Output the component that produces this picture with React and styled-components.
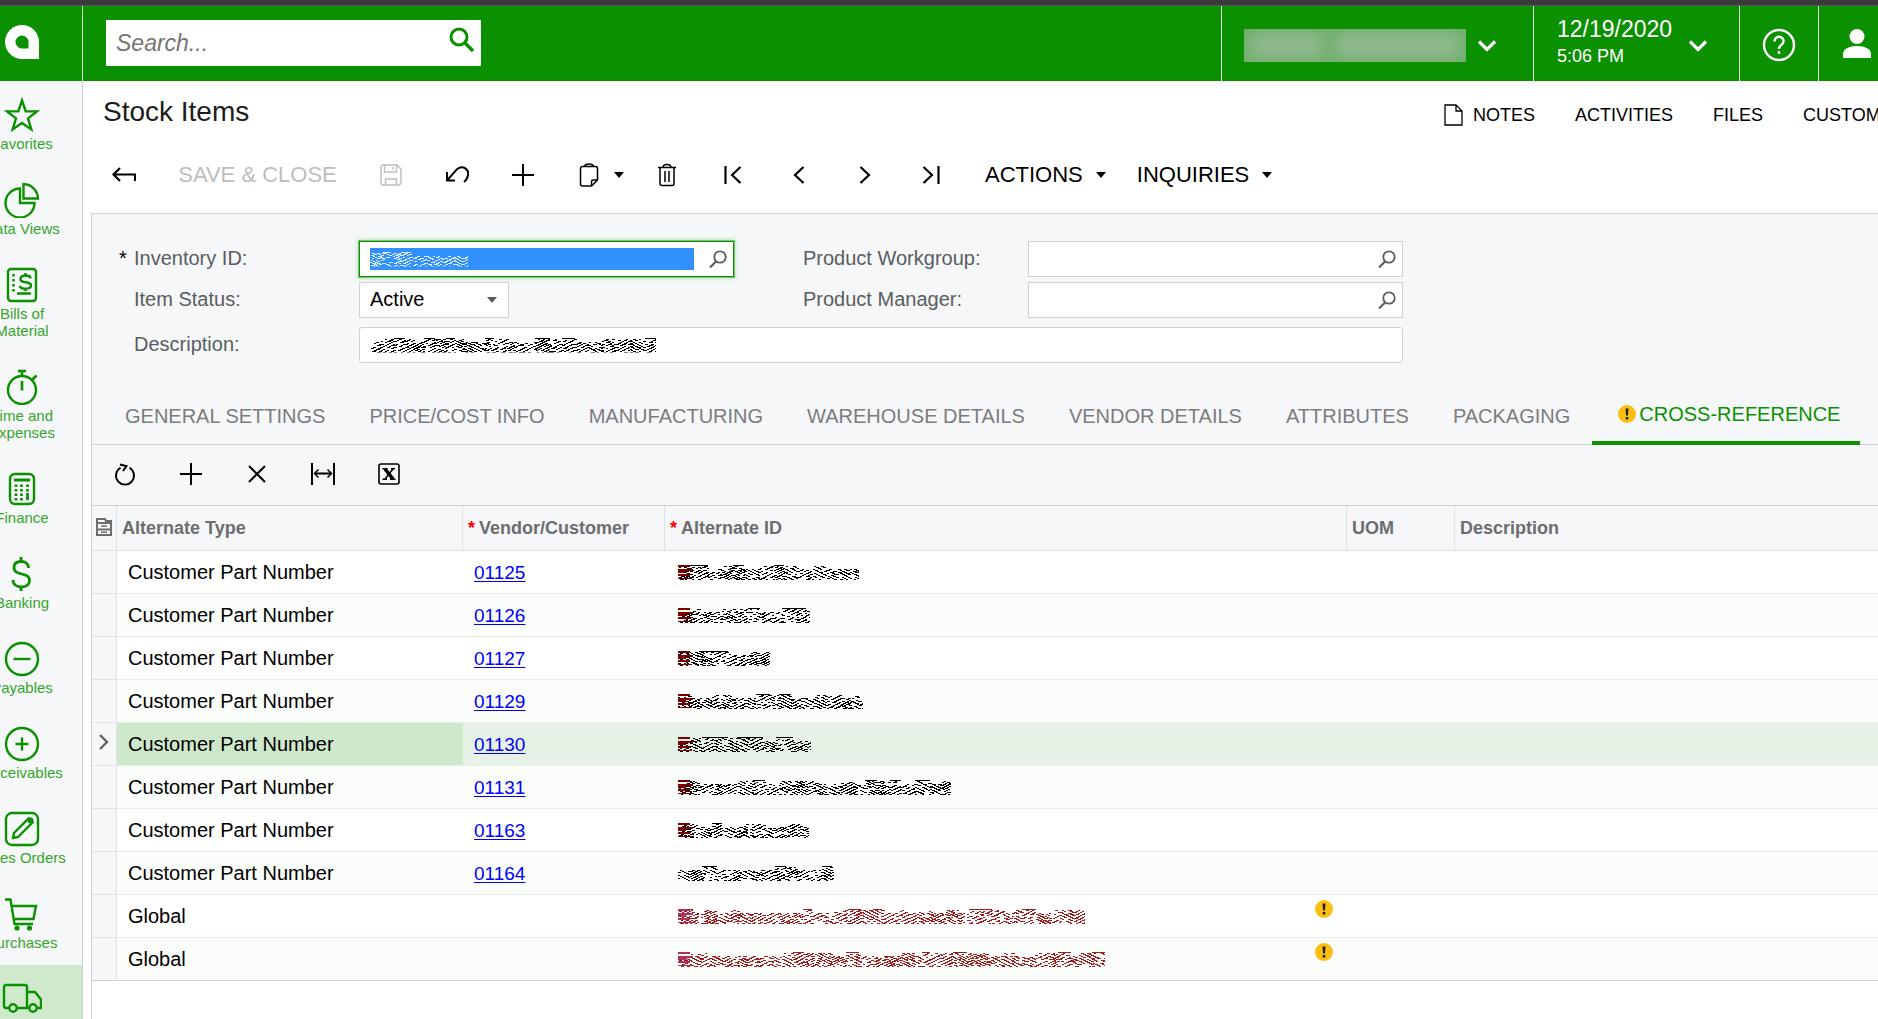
import React from "react";
import styled, { createGlobalStyle, css } from "styled-components";

const green = "#0b9000";
const line = "#cfd2d6";
const softLine = "#dfe2e6";
const pale = "#f5f7f9";
const font = '"Liberation Sans", Arial, sans-serif';

const Global = createGlobalStyle`
  *, *::before, *::after { box-sizing: border-box; }
  html, body { margin: 0; height: 100%; overflow: hidden; }
  body { font-family: ${font}; background: #fff; color: #000; }
  button, input, select { font-family: inherit; }
  svg { display: block; flex: none; }
`;

const Page = styled.div`
  display: flex;
  flex-direction: column;
  height: 100vh;
  overflow: hidden;
  border-top: 5px solid #3a393b;
`;

/* ---------- header ---------- */
const Header = styled.header`
  display: flex;
  flex: none;
  height: 76px;
  background: ${green};
  border-top: 1px solid #5a5560;
`;
const LogoLink = styled.a`
  display: flex;
  align-items: center;
  width: 83px;
  padding-left: 5px;
  padding-bottom: 4px;
  border-right: 1px solid #cfe0cf;
`;
const SearchBox = styled.form`
  display: flex;
  align-items: center;
  width: 375px;
  height: 46px;
  margin: 14px auto 0 23px;
  background: #fff;
`;
const SearchInput = styled.input`
  flex: 1;
  min-width: 0;
  height: 46px;
  padding: 0 10px;
  border: 0;
  outline: 0;
  background: none;
  font-size: 23px;
  &::placeholder { font-style: italic; color: #757575; opacity: 1; }
`;
const SearchButton = styled.button`
  padding: 0 7px 6px 0;
  border: 0;
  background: none;
`;
const HeaderCell = styled.button`
  display: flex;
  flex: none;
  align-items: center;
  width: ${(p) => p.$width}px;
  padding: ${(p) => p.$top || 0}px 0 0 ${(p) => p.$pad}px;
  border: 0;
  border-left: 1px solid #e3f1e2;
  background: none;
  color: #fff;
  text-align: left;
`;
const Company = styled.span`
  display: flex;
  align-items: center;
  justify-content: space-around;
  width: 222px;
  height: 33px;
  margin-right: 11px;
  overflow: hidden;
  background: #6fae6b;
`;
const Smudge = styled.span`
  width: ${(p) => p.$width}px;
  height: 20px;
  background: #90ba8e;
  filter: blur(7px);
  box-shadow: 0 0 6px 4px #86b583;
`;
const Clock = styled.span`
  display: flex;
  flex-direction: column;
  width: 131px;
  padding-bottom: 8px;
`;
const DateText = styled.span`
  font-size: 23px;
  line-height: 28px;
`;
const TimeText = styled.span`
  font-size: 18px;
  line-height: 26px;
`;

/* ---------- sidebar ---------- */
const Body = styled.div`
  display: flex;
  flex: 1;
  min-height: 0;
`;
const Sidebar = styled.nav`
  flex: none;
  width: 83px;
  overflow: hidden;
  background: ${pale};
  border-right: 1px solid ${line};
`;
const NavList = styled.ul`
  width: 120px;
  margin: 0 0 0 -38px;
  padding: 0;
  list-style: none;
`;
const NavLink = styled.a`
  display: flex;
  flex-direction: column;
  align-items: center;
  gap: 2px;
  padding: 16px 16px 14px;
  color: #35a52d;
  font-size: 15px;
  line-height: 17px;
  text-align: center;
  text-decoration: none;
  white-space: pre-line;
  background: ${(p) => (p.$active ? "#cfe9cd" : "transparent")};
  svg { color: ${green}; }
`;

/* ---------- page top ---------- */
const Main = styled.main`
  display: flex;
  flex: 1;
  flex-direction: column;
  min-width: 0;
`;
const TitleBar = styled.div`
  display: flex;
  flex: none;
  align-items: center;
  justify-content: space-between;
  height: 54px;
  padding: 8px 0 0 20px;
`;
const Title = styled.h1`
  margin: 0;
  font-size: 28px;
  line-height: 32px;
  font-weight: 400;
  color: #1c1c1c;
`;
const PageLinks = styled.div`
  display: flex;
  flex: none;
  gap: 40px;
  width: 434px;
  padding-top: 6px;
`;
const PageLink = styled.button`
  display: flex;
  align-items: center;
  gap: 10px;
  padding: 0;
  border: 0;
  background: none;
  color: #000;
  font-size: 18px;
  line-height: 22px;
`;
const Toolbar = styled.div`
  display: flex;
  flex: none;
  align-items: center;
  height: ${(p) => p.$height}px;
  padding-left: ${(p) => p.$pad || 0}px;
  ${(p) => (p.$ruled ? css`padding-bottom: 2px; border-bottom: 1px solid ${line};` : css`padding-top: 2px;`)}
`;
const IconButton = styled.button`
  display: flex;
  align-items: center;
  justify-content: center;
  gap: 14px;
  width: ${(p) => (p.$split ? 78 : 66)}px;
  height: 44px;
  padding: 0 ${(p) => (p.$split ? 8 : 0)}px 0 ${(p) => (p.$split ? 22 : 0)}px;
  border: 0;
  background: none;
  color: ${(p) => (p.disabled ? "#bdbdbd" : "#000")};
`;
const TextButton = styled.button`
  display: flex;
  align-items: center;
  gap: 12px;
  height: 44px;
  padding: 0 9px 0 21px;
  border: 0;
  background: none;
  color: ${(p) => (p.disabled ? "#bdbdbd" : "#000")};
  font-size: 22px;
  white-space: nowrap;
`;
const SaveClose = styled(TextButton)`
  justify-content: center;
  width: 201px;
  padding: 0;
`;

/* ---------- form ---------- */
const Panel = styled.section`
  display: flex;
  flex: 1;
  flex-direction: column;
  min-height: 0;
  margin-left: 8px;
  border: 1px solid ${line};
  border-width: 1px 0 0 1px;
`;
const Form = styled.form`
  display: grid;
  grid-template-columns: 240px 375px 54px 240px 375px;
  padding: 27px 0 0 27px;
  background: ${pale};
`;
const Label = styled.label`
  display: flex;
  align-items: center;
  height: 36px;
  padding: 0 0 1px ${(p) => (p.$required ? 0 : 15)}px;
  color: #5b5d60;
  font-size: 20px;
  grid-column: ${(p) => p.$col || 1};
  margin-top: ${(p) => p.$gap || 0}px;
`;
const Star = styled.span`
  width: 15px;
  color: #000;
`;
const Field = styled.div`
  position: relative;
  display: flex;
  align-items: center;
  width: ${(p) => (p.$narrow ? "150px" : "auto")};
  height: 36px;
  margin-top: ${(p) => p.$gap || 0}px;
  grid-column: ${(p) => p.$col || 2};
  background: #fff;
  border: 1px solid ${(p) => (p.$focus ? green : "#cfcfd6")};
  border-radius: ${(p) => (p.$wide ? 3 : 0)}px;
  ${(p) => p.$focus && css`box-shadow: 0 0 0 1px #7cc376, 0 0 4px 1px #a7d6a3;`}
`;
const Input = styled.input`
  flex: 1;
  min-width: 0;
  height: ${(p) => (p.$selected ? 22 : 34)}px;
  margin-left: 10px;
  padding: 0;
  border: 0;
  outline: 0;
  font-size: 20px;
  background: ${(p) => (p.$selected ? "#3390ff" : "transparent")};
`;
const Lookup = styled.button`
  width: 39px;
  padding: 0 6px 1px 15px;
  border: 0;
  background: none;
  color: #5b5d60;
`;
const Select = styled.select`
  appearance: none;
  width: 100%;
  height: 34px;
  padding: 0 0 2px 10px;
  border: 0;
  outline: 0;
  background: none;
  color: #000;
  font-size: 20px;
`;
const Overlay = styled.span`
  position: absolute;
  top: 50%;
  left: 10px;
  transform: translateY(-50%);
  pointer-events: none;
`;
const SelectCaret = styled.span`
  position: absolute;
  right: 10px;
  top: 14px;
  color: #5b5d60;
  pointer-events: none;
`;

/* ---------- tabs ---------- */
const Tabs = styled.div`
  display: flex;
  flex: none;
  height: 82px;
  padding: 22px 0 0 11px;
  background: ${pale};
  box-shadow: inset 0 -1px 0 ${line};
`;
const Tab = styled.button`
  display: flex;
  align-items: center;
  gap: 3px;
  padding: ${(p) => (p.$active ? "2px 20px 0 26px" : "6px 22px 0")};
  border: 0;
  border-bottom: 4px solid ${(p) => (p.$active ? green : "transparent")};
  background: none;
  color: ${(p) => (p.$active ? green : "#7b7d80")};
  font-size: 20px;
  white-space: nowrap;
`;

/* ---------- grid ---------- */
const GridTools = styled.div`
  flex: none;
  background: ${pale};
`;
const Table = styled.table`
  width: 100%;
  table-layout: fixed;
  border-collapse: separate;
  border-spacing: 0;
`;
const Th = styled.th`
  height: 45px;
  padding: 0 0 0 5px;
  border-right: 1px solid ${softLine};
  border-bottom: 1px solid ${softLine};
  background: ${pale};
  color: #6b6d70;
  font-size: 18px;
  text-align: left;
  white-space: nowrap;
  &:first-child { padding: 0 0 2px 4px; }
  &:last-child { border-right: 0; }
`;
const Req = styled.span`
  color: #f00;
  margin-right: 4px;
`;
const Row = styled.tr`
  background: ${(p) => (p.$selected ? "#e6f2e5" : p.$odd ? "#fbfdfa" : "#fff")};
`;
const Td = styled.td`
  height: 43px;
  padding: 1px 14px 0 ${(p) => p.$pad || 11}px;
  border-bottom: 1px solid #e6f1e5;
  background: ${(p) => (p.$current ? "#cde8cb" : "transparent")};
  font-size: 20px;
  white-space: nowrap;
  tr:last-child > & { border-bottom-color: ${line}; }
`;
const Handle = styled.td`
  padding: 0 0 4px 6px;
  background: ${pale};
  border-right: 1px solid ${softLine};
  border-bottom: 1px solid ${softLine};
  color: #5b5d60;
  tr:last-child > & { border-bottom-color: ${line}; }
`;
const VendorLink = styled.a`
  color: #00f;
  font-size: 19px;
  text-underline-offset: 2px;
`;
const AltCell = styled.div`
  display: flex;
  align-items: center;
  justify-content: space-between;
`;
const Badge = styled.span`
  margin-bottom: 16px;
`;

/* ---------- drawings ---------- */
const Svg = ({ w, h = w, sw = 2, fill = "none", children, ...rest }) => (
  <svg width={w} height={h} viewBox={`0 0 ${w} ${h}`} fill={fill} stroke="currentColor" strokeWidth={sw} aria-hidden="true" {...rest}>
    {children}
  </svg>
);

const Logo = () => (
  <svg width="34" height="34" viewBox="0 0 34 34" aria-hidden="true">
    <path fill="#fff" fillRule="evenodd" d="M17 0a17 17 0 0 1 17 17v17H17A17 17 0 0 1 17 0Zm0 10.500a6.500 6.500 0 0 0 0 13h6.500V17A6.500 6.500 0 0 0 17 10.500Z" />
  </svg>
);
const SearchGlyph = () => (
  <Svg w={26} sw={3} color={green}><circle cx="11" cy="10" r="8" /><path d="M16.500 15.500l8.500 8.500" strokeWidth="3.400" /></Svg>
);
const Down = () => <Svg w={20} h={12} sw={3.2} color="#fff"><path d="M2 1.500l8 8 8-8" /></Svg>;
const Help = () => (
  <Svg w={34} sw={2.4} color="#fff">
    <circle cx="17" cy="17" r="15" />
    <path d="M12.500 13.500c0-6.500 9.500-6 9 0-.3 3.500-4.500 3.500-4.500 7.500M17 23v3" />
  </Svg>
);
const Person = () => (
  <Svg w={30} h={30} sw={0} fill="#fff"><ellipse cx="15" cy="7.500" rx="7.500" ry="7.500" /><path d="M1 29v-4c0-5 6-8 14-8s14 3 14 8v4Z" /></Svg>
);
const DocIcon = () => <Svg w={19} h={22} sw={1.3}><path d="M1 1h11l6 6v14H1ZM12 1v6h6" /></Svg>;
const Caret = () => <Svg w={12} h={6} sw={0} fill="currentColor"><path d="M1 0h10L6 6Z" /></Svg>;

const nav = {
  star: <path d="M18 3.500l3.700 10.700 11.300.2-9 7 3.300 11L18 26l-9.300 6.400 3.300-11-9-7 11.300-.2Z" />,
  pie: <><path d="M16 6.500A14.500 14.500 0 1 0 30.500 21H16Z" /><path d="M19.500 2a15 15 0 0 1 14.500 14.500H19.500Z" /></>,
  bill: <>
    <rect x="4" y="2" width="28" height="32" rx="3" />
    <path d="M9.500 7v20" strokeDasharray="2.500 2.500" strokeWidth="2.500" />
    <path d="M13 26.500h14M26.500 11.500c0-2-2-3-5-3s-5 1-5 3.500 2 2.800 5 3.200 5.500 1 5.500 3.300-2.200 3.200-5.500 3.200-5.500-1-5.500-3M21.500 6v2.500M21.500 21.700v2.500" />
  </>,
  timer: <><circle cx="18" cy="21" r="14" /><path d="M14 2h8M18 2v5M28 11l4.500-4.500M18 12v9.500" strokeWidth="2.600" /></>,
  calc: <>
    <rect x="6" y="3" width="24" height="30" rx="5" />
    <path d="M10 9h16" strokeWidth="3" />
    <path d="M12 13.500v16M17.500 13.500v16M23.500 13.500v7" strokeDasharray="2.600 1.900" strokeWidth="2.800" />
    <path d="M23.500 22v7" strokeWidth="2.800" />
  </>,
  dollar: <path d="M24.500 12c0-4-2.700-6.500-7.300-6.500s-7.200 2.300-7.200 6c0 9 15.500 4 15.500 13 0 3.800-3.300 6.500-8 6.500S9 28.500 9 24M17 1v4.500M17 31v4" strokeWidth="2.800" />,
  minus: <><circle cx="18" cy="18" r="16" /><path d="M9.500 18h17" /></>,
  plus: <><circle cx="18" cy="18" r="16" /><path d="M11.500 18h13M18 11.500v13" /></>,
  pencil: <><rect x="2" y="2" width="32" height="32" rx="6" /><path d="M9 27l1-5L24.500 7.500l4 4L14 26Z" /><circle cx="26.500" cy="9.500" r="3" fill="currentColor" stroke="none" /></>,
  cart: <><path d="M1 3.500h5.500L10.500 28H29M8 10h24l-2.500 13H10" /><circle cx="13" cy="32" r="2.600" fill="currentColor" stroke="none" /><circle cx="25.500" cy="32" r="2.600" fill="currentColor" stroke="none" /></>,
  truck: <>
    <path d="M5.500 27H2a2 2 0 0 1-2-2V6a2 2 0 0 1 2-2h19a2 2 0 0 1 2 2v21H12.500M23 11h8l6 7.500V27h-4M26 27h-3" />
    <circle cx="9" cy="27" r="3.700" /><circle cx="29" cy="27" r="3.700" />
  </>,
};
const NavIcon = ({ name }) => <Svg w={40} h={36} sw={2.4} viewBox="-2 0 40 36">{nav[name]}</Svg>;

const Back = () => <Svg w={24} sw={2.2}><path d="M23 18v-6.500H1.500M8 5l-6.500 6.500L8 18" /></Svg>;
const Save = () => <Svg w={22} sw={1.4}><path d="M3 1h14l4 4v13a3 3 0 0 1-3 3H3a2 2 0 0 1-2-2V3a2 2 0 0 1 2-2ZM4.500 1v7h12V1M13 3v3M5.500 21v-6h11v6" /></Svg>;
const Undo = () => <Svg w={24} sw={2}><path d="M2 17.500L12 6.200c6-4.700 12.500.5 11 6.300-.6 2.700-2 5-4 6.500M2 9v8.500h8" /></Svg>;
const Plus = () => <Svg w={22} sw={2}><path d="M0 11h22M11 0v22" /></Svg>;
const Clip = () => <Svg w={20} h={24} sw={1.5}><path d="M1.500 5.500a2 2 0 0 1 2-2h13a2 2 0 0 1 2 2V17l-6 6h-9a2 2 0 0 1-2-2ZM5.500 3.500C6 0 14 0 14.500 3.500M12.500 23v-4.500a1.500 1.500 0 0 1 1.500-1.500h4.500" /></Svg>;
const Trash = () => <Svg w={18} h={24} sw={1.5}><path d="M0 4.500h18M2 4.500v16a2 2 0 0 0 2 2h10a2 2 0 0 0 2-2v-16M5 4.500C5 .5 13 .5 13 4.500M7 8v11M11 8v11" /></Svg>;
const First = () => <Svg w={18} sw={2.2}><path d="M1.500 0v18M16.500 1L8 9l8.500 8" /></Svg>;
const Last = () => <Svg w={18} sw={2.2}><path d="M16.500 0v18M1.500 1L10 9l-8.500 8" /></Svg>;
const Prev = () => <Svg w={12} h={18} sw={2.2}><path d="M10.500 1L2 9l8.500 8" /></Svg>;
const Next = () => <Svg w={12} h={18} sw={2.2}><path d="M1.500 1L10 9l-8.500 8" /></Svg>;
const Refresh = () => <Svg w={22} h={24} sw={1.9}><path d="M15.500 5.800a9 9 0 1 1-9 0M6 2.500l6.500 1.500-3.500 5" /></Svg>;
const Cross = () => <Svg w={20} sw={2}><path d="M2 2l16 16M18 2L2 18" /></Svg>;
const Fit = () => <Svg w={26} h={22} sw={2}><path d="M2 0v22M24 0v22M5 10.500h16" /><path d="M8.500 6.500l-4 4 4 4M17.500 6.500l4 4-4 4" strokeWidth="1.500" /></Svg>;
const Excel = () => (
  <Svg w={22} sw={1.6}><rect x="1" y="1" width="20" height="20" rx="2" /><path d="M7 6l8 10" strokeWidth="3.600" /><path d="M15 6L7 16M4.500 5.700h5M13 5.700h4M4.500 16.300h4.500M12 16.300h5.500" strokeWidth="1.500" /></Svg>
);
const Lens = () => <Svg w={18} h={18} sw={1.8}><circle cx="11" cy="7" r="5.700" /><path d="M7 11.500L1 17.500" strokeWidth="2.200" /></Svg>;
const GridIcon = () => (
  <Svg w={16} h={18} sw={2}><path d="M1 1h8l1 2h5v14H1ZM1 5h14M1 11.500h14" /><path d="M5 8h6M5 14.200h6" strokeWidth="1.600" /></Svg>
);
const Pointer = () => <Svg w={12} h={18} sw={2.2}><path d="M2 2l7 7-7 7" /></Svg>;
const Warn = () => (
  <Svg w={18} sw={0}><circle cx="9" cy="9" r="9" fill="#fdbf0f" /><path fill="#222" d="M7.500 3.500h3L10 10.500H8ZM7.700 12h2.600v2.500H7.700Z" /></Svg>
);

/* Slanted, broken hatching that stands where a value has been obscured. */
function hatch(width, seed) {
  let s = seed * 7919 + 13;
  const rnd = () => {
    s = (s * 1103515245 + 12345) % 2147483648;
    return s / 2147483648;
  };
  const glyphs = [];
  for (let x = 0; x < width; ) {
    const w = 8 + Math.floor(rnd() * 8);
    glyphs.push({ x, w, slant: rnd() < 0.6 ? 1 : -1, bar: rnd() < 0.4, low: rnd() < 0.4, step: 5 + Math.floor(rnd() * 3) });
    x += w;
  }
  let d = "";
  glyphs.forEach((g) => {
    for (let y = 0; y < 15; y++) {
      if (g.low && y < 4) continue;
      if (y === 0) {
        if (g.bar) d += `M${g.x} 0h${Math.min(g.w, width - g.x)}v1h-${Math.min(g.w, width - g.x)}z`;
        continue;
      }
      const start = (((-y * g.slant * 2) % g.step) + g.step) % g.step;
      for (let x = start; x < g.w; x += g.step) {
        if (rnd() < 0.2) continue;
        const len = Math.min(2 + Math.floor(rnd() * 2.4), width - g.x - x);
        if (len > 0) d += `M${g.x + x} ${y}h${len}v1h-${len}z`;
      }
    }
  });
  return d;
}
const Scrambled = ({ width, seed, color = "#000", edge }) => (
  <svg width={width} height={15} viewBox={`0 0 ${width} 15`} shapeRendering="crispEdges" aria-hidden="true">
    <path d={hatch(width, seed)} fill={color} />
    {edge && <path fill={edge} d="M0 0h12v2H0zM0 4h15v2H0zM0 6h8v2H0zM0 9h12v2H0zM0 13h14v1H0z" />}
  </svg>
);

/* ---------- data ---------- */
const navItems = [
  ["star", "Favorites"],
  ["pie", "Data Views"],
  ["bill", "Bills of\nMaterial"],
  ["timer", "Time and\nExpenses"],
  ["calc", "Finance"],
  ["dollar", "Banking"],
  ["minus", "Payables"],
  ["plus", "Receivables"],
  ["pencil", "Sales Orders"],
  ["cart", "Purchases"],
  ["truck", "Inventory"],
];
const tabs = ["GENERAL SETTINGS", "PRICE/COST INFO", "MANUFACTURING", "WAREHOUSE DETAILS", "VENDOR DETAILS", "ATTRIBUTES", "PACKAGING"];
const rows = [
  { vendor: "01125", width: 181 },
  { vendor: "01126", width: 132 },
  { vendor: "01127", width: 92 },
  { vendor: "01129", width: 185 },
  { vendor: "01130", width: 133, selected: true },
  { vendor: "01131", width: 273 },
  { vendor: "01163", width: 131 },
  { vendor: "01164", width: 156 },
  { width: 407, warn: true },
  { width: 427, warn: true },
];

export default function App() {
  return (
    <Page>
      <Global />
      <Header>
        <LogoLink href="#home" aria-label="Home"><Logo /></LogoLink>
        <SearchBox role="search">
          <SearchInput type="text" placeholder="Search..." aria-label="Search" />
          <SearchButton type="button" aria-label="Run search"><SearchGlyph /></SearchButton>
        </SearchBox>
        <HeaderCell type="button" $width={312} $pad={22} $top={4} aria-label="Company">
          <Company><Smudge $width={66} /><Smudge $width={118} /></Company>
          <Down />
        </HeaderCell>
        <HeaderCell type="button" $width={206} $pad={23} $top={4}>
          <Clock><DateText>12/19/2020</DateText><TimeText>5:06 PM</TimeText></Clock>
          <Down />
        </HeaderCell>
        <HeaderCell type="button" $width={79} $pad={22} $top={3} aria-label="Help"><Help /></HeaderCell>
        <HeaderCell type="button" $width={60} $pad={23} aria-label="User"><Person /></HeaderCell>
      </Header>
      <Body>
        <Sidebar aria-label="Modules">
          <NavList>
            {navItems.map(([icon, text]) => (
              <li key={icon}>
                <NavLink href={`#${icon}`} $active={icon === "truck"}><NavIcon name={icon} />{text}</NavLink>
              </li>
            ))}
          </NavList>
        </Sidebar>
        <Main>
          <TitleBar>
            <Title>Stock Items</Title>
            <PageLinks>
              <PageLink type="button"><DocIcon />NOTES</PageLink>
              <PageLink type="button">ACTIVITIES</PageLink>
              <PageLink type="button">FILES</PageLink>
              <PageLink type="button">CUSTOMIZATION</PageLink>
            </PageLinks>
          </TitleBar>
          <Toolbar $height={78} $pad={8}>
            <IconButton type="button" aria-label="Back"><Back /></IconButton>
            <SaveClose type="button" disabled>SAVE &amp; CLOSE</SaveClose>
            <IconButton type="button" aria-label="Save" disabled><Save /></IconButton>
            <IconButton type="button" aria-label="Undo"><Undo /></IconButton>
            <IconButton type="button" aria-label="Add"><Plus /></IconButton>
            <IconButton type="button" aria-label="Clipboard" $split><Clip /><Caret /></IconButton>
            <IconButton type="button" aria-label="Delete"><Trash /></IconButton>
            <IconButton type="button" aria-label="First"><First /></IconButton>
            <IconButton type="button" aria-label="Previous"><Prev /></IconButton>
            <IconButton type="button" aria-label="Next"><Next /></IconButton>
            <IconButton type="button" aria-label="Last"><Last /></IconButton>
            <TextButton type="button">ACTIONS<Caret /></TextButton>
            <TextButton type="button">INQUIRIES<Caret /></TextButton>
          </Toolbar>
          <Panel>
            <Form>
              <Label htmlFor="inventory" $required><Star>*</Star>Inventory ID:</Label>
              <Field $focus>
                <Input id="inventory" $selected />
                <Overlay><Scrambled width={98} seed={31} color="#d9ecff" /></Overlay>
                <Lookup type="button" aria-label="Find inventory ID"><Lens /></Lookup>
              </Field>
              <Label htmlFor="workgroup" $col={4}>Product Workgroup:</Label>
              <Field $col={5}>
                <Input id="workgroup" />
                <Lookup type="button" aria-label="Find workgroup"><Lens /></Lookup>
              </Field>
              <Label htmlFor="status" $gap={5}>Item Status:</Label>
              <Field $narrow $gap={5}>
                <Select id="status" defaultValue="Active"><option>Active</option></Select>
                <SelectCaret><Caret /></SelectCaret>
              </Field>
              <Label htmlFor="manager" $col={4} $gap={5}>Product Manager:</Label>
              <Field $col={5} $gap={5}>
                <Input id="manager" />
                <Lookup type="button" aria-label="Find manager"><Lens /></Lookup>
              </Field>
              <Label htmlFor="description" $gap={9}>Description:</Label>
              <Field $col="2 / 6" $wide $gap={9}>
                <Input id="description" />
                <Overlay><Scrambled width={286} seed={47} /></Overlay>
              </Field>
            </Form>
            <Tabs role="tablist">
              {tabs.map((t) => <Tab key={t} type="button" role="tab">{t}</Tab>)}
              <Tab type="button" role="tab" aria-selected="true" $active><Warn />CROSS-REFERENCE</Tab>
            </Tabs>
            <GridTools>
              <Toolbar $height={61} $ruled>
                <IconButton type="button" aria-label="Refresh"><Refresh /></IconButton>
                <IconButton type="button" aria-label="Add row"><Plus /></IconButton>
                <IconButton type="button" aria-label="Delete row"><Cross /></IconButton>
                <IconButton type="button" aria-label="Fit to screen"><Fit /></IconButton>
                <IconButton type="button" aria-label="Export to Excel"><Excel /></IconButton>
              </Toolbar>
            </GridTools>
            <Table>
              <colgroup>
                <col width="25" /><col width="346" /><col width="202" /><col width="682" /><col width="108" /><col />
              </colgroup>
              <thead>
                <tr>
                  <Th aria-label="Row settings"><GridIcon /></Th>
                  <Th>Alternate Type</Th>
                  <Th><Req>*</Req>Vendor/Customer</Th>
                  <Th><Req>*</Req>Alternate ID</Th>
                  <Th>UOM</Th>
                  <Th>Description</Th>
                </tr>
              </thead>
              <tbody>
                {rows.map((r, i) => (
                  <Row key={i} $odd={i % 2 === 1} $selected={r.selected}>
                    <Handle>{r.selected && <Pointer />}</Handle>
                    <Td $current={r.selected}>{r.vendor ? "Customer Part Number" : "Global"}</Td>
                    <Td>{r.vendor && <VendorLink href={`#${r.vendor}`}>{r.vendor}</VendorLink>}</Td>
                    <Td $pad={13}>
                      <AltCell>
                        <Scrambled width={r.width} seed={i + 3} color={r.warn ? "#a01c1c" : "#000"} edge={r.warn ? "#b0305c" : i === 7 ? undefined : "#7d0000"} />
                        {r.warn && <Badge><Warn /></Badge>}
                      </AltCell>
                    </Td>
                    <Td />
                    <Td />
                  </Row>
                ))}
              </tbody>
            </Table>
          </Panel>
        </Main>
      </Body>
    </Page>
  );
}
